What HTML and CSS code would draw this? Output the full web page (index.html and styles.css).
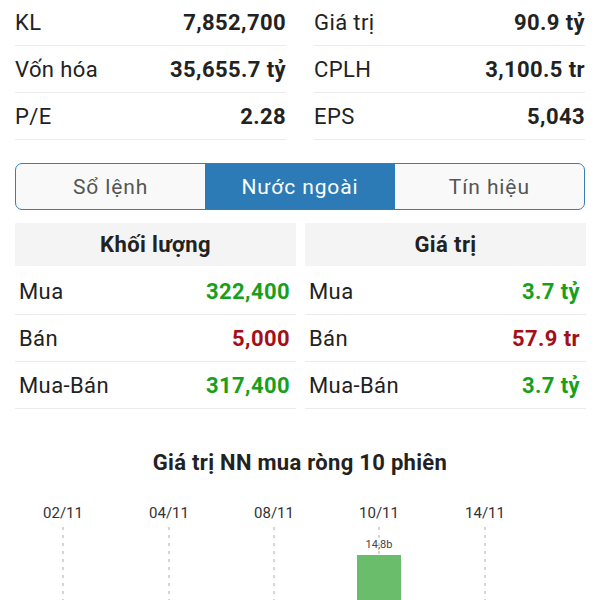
FILE: index.html
```html
<!DOCTYPE html>
<html lang="vi">
<head>
    <meta charset="UTF-8">
    <meta name="viewport" content="width=device-width, initial-scale=1.0">
    <title>Nước ngoài</title>
    <link rel="stylesheet" href="styles.css">
</head>
<body>
    <div class="page">
        <!-- Thong tin co ban -->
        <div class="stats">
            <div class="stat-col">
                <div class="stat-row"><span>KL</span><b>7,852,700</b></div>
                <div class="stat-row"><span>Vốn hóa</span><b>35,655.7 tỷ</b></div>
                <div class="stat-row"><span>P/E</span><b>2.28</b></div>
            </div>
            <div class="stat-col">
                <div class="stat-row"><span>Giá trị</span><b>90.9 tỷ</b></div>
                <div class="stat-row"><span>CPLH</span><b>3,100.5 tr</b></div>
                <div class="stat-row"><span>EPS</span><b>5,043</b></div>
            </div>
        </div>

        <!-- Tabs -->
        <div class="tabs">
            <div class="tab">Sổ lệnh</div>
            <div class="tab active">Nước ngoài</div>
            <div class="tab">Tín hiệu</div>
        </div>

        <!-- Bang nuoc ngoai -->
        <div class="foreign">
            <div class="ftable">
                <div class="fhead">Khối lượng</div>
                <div class="frow"><span>Mua</span><b class="up">322,400</b></div>
                <div class="frow"><span>Bán</span><b class="down">5,000</b></div>
                <div class="frow"><span>Mua-Bán</span><b class="up">317,400</b></div>
            </div>
            <div class="ftable">
                <div class="fhead">Giá trị</div>
                <div class="frow"><span>Mua</span><b class="up">3.7 tỷ</b></div>
                <div class="frow"><span>Bán</span><b class="down">57.9 tr</b></div>
                <div class="frow"><span>Mua-Bán</span><b class="up">3.7 tỷ</b></div>
            </div>
        </div>

        <h3 class="chart-title">Giá trị NN mua ròng 10 phiên</h3>

        <!-- Bieu do -->
        <svg class="chart" width="600" height="110" viewBox="0 490 600 110">
            <g class="grid">
                <line x1="63" y1="527" x2="63" y2="600"/>
                <line x1="169" y1="527" x2="169" y2="600"/>
                <line x1="274" y1="527" x2="274" y2="600"/>
                <line x1="379" y1="527" x2="379" y2="600"/>
                <line x1="485" y1="527" x2="485" y2="600"/>
            </g>
            <g class="dates">
                <text x="63" y="518">02/11</text>
                <text x="169" y="518">04/11</text>
                <text x="274" y="518">08/11</text>
                <text x="379" y="518">10/11</text>
                <text x="485" y="518">14/11</text>
            </g>
            <rect class="bar" x="357" y="555" width="44" height="50"/>
            <text class="bar-label" x="379" y="548">14,8b</text>
        </svg>
    </div>
</body>
</html>
```

FILE: styles.css
```css
body {
    font-family: Roboto, "Noto Sans", sans-serif;
    background-color: #fff;
    color: #222;
    margin: 0;
    padding: 0;
}
.page {
    padding: 0 15px;
}
.stats {
    display: grid;
    grid-template-columns: 1fr 1fr;
    column-gap: 28px;
    margin-top: -1px;
}
.stat-row {
    display: flex;
    justify-content: space-between;
    align-items: center;
    height: 47px;
    box-sizing: border-box;
    border-bottom: 1px solid #ebebeb;
    font-size: 22px;
    letter-spacing: 0.4px;
}
.stat-row span {
    color: #222;
}
.stat-row b {
    font-weight: 700;
    color: #222;
}
.tabs {
    display: flex;
    margin-top: 23px;
    height: 47px;
    box-sizing: border-box;
    border: 1px solid #3a7db3;
    border-radius: 7px;
    overflow: hidden;
    background-color: #f9f9f9;
}
.tab {
    flex: 1;
    display: flex;
    justify-content: center;
    align-items: center;
    font-size: 21px;
    letter-spacing: 0.9px;
    color: #555;
}
.tab.active {
    background-color: #2c7bb6;
    color: #fff;
}
.foreign {
    display: grid;
    grid-template-columns: 1fr 1fr;
    column-gap: 9px;
    margin-top: 13px;
    margin-right: -1px;
}
.fhead {
    height: 43px;
    display: flex;
    justify-content: center;
    align-items: center;
    background-color: #f4f4f4;
    font-size: 22px;
    letter-spacing: 0.4px;
    font-weight: 700;
    color: #222;
    margin-bottom: 2px;
}
.frow {
    display: flex;
    justify-content: space-between;
    align-items: center;
    height: 47px;
    box-sizing: border-box;
    border-bottom: 1px solid #ebebeb;
    padding: 0 6px 0 4px;
    font-size: 22px;
    letter-spacing: 0.4px;
}
.frow b {
    font-weight: 700;
}
.up {
    color: #18a01c;
}
.down {
    color: #a50f17;
}
.chart-title {
    margin: 41px 0 0;
    text-align: center;
    font-size: 22px;
    letter-spacing: 0.3px;
    font-weight: 700;
    color: #222;
}
.chart {
    display: block;
    margin: 15px -15px 0;
}
.grid line {
    stroke: #aaa;
    stroke-width: 1;
    stroke-dasharray: 3 5;
}
.dates text {
    font-size: 15px;
    fill: #333;
    text-anchor: middle;
}
.bar {
    fill: #6abd6a;
}
.bar-label {
    font-size: 11px;
    fill: #444;
    text-anchor: middle;
}
```
